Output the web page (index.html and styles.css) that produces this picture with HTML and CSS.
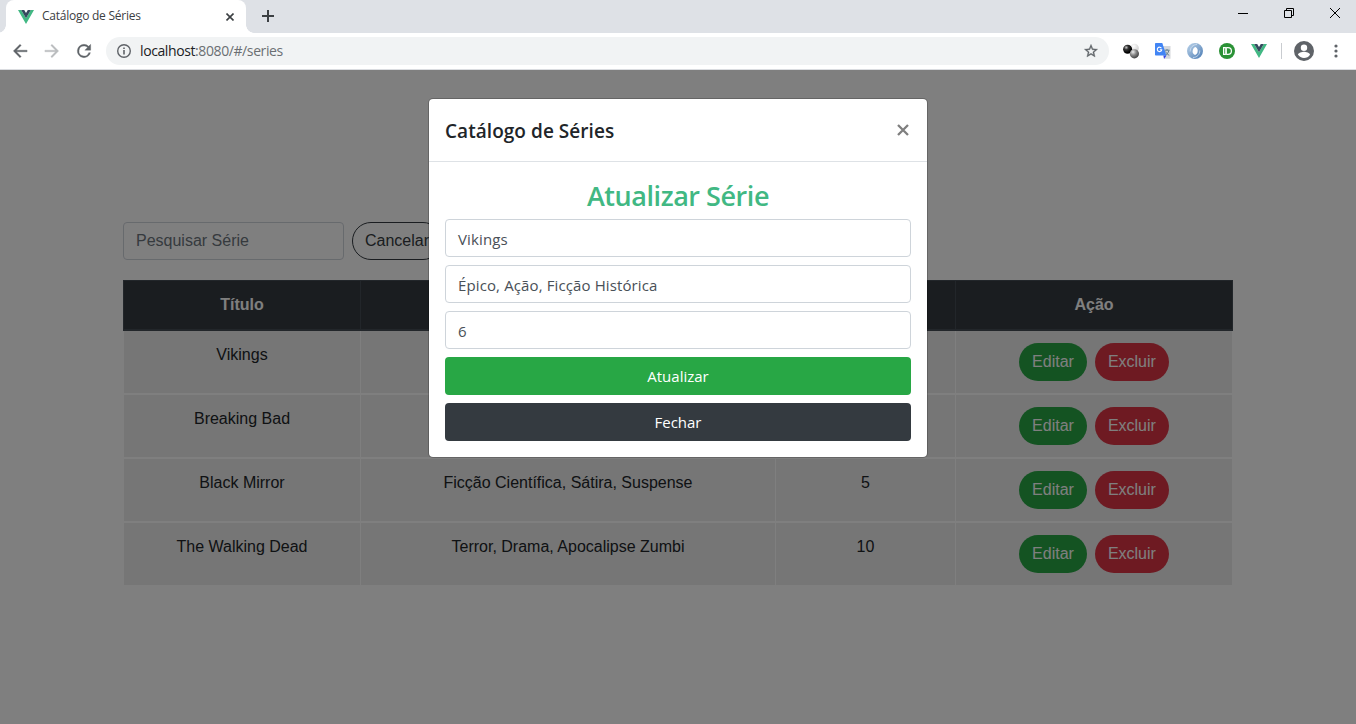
FILE: index.html
```
<!DOCTYPE html>
<html lang="pt-BR">
<head>
<meta charset="utf-8">
<title>Catálogo de Séries</title>
<link rel="stylesheet" href="styles.css">
</head>
<body>
<div class="window">
  <header class="tabstrip">
    <div class="tab">
      <svg class="favicon" width="16" height="14" viewBox="0 0 16 14"><path d="M0 0h3.2L8 8.3 12.8 0H16L8 13.9z" fill="#41b883"/><path d="M3.2 0h3L8 3.1 9.8 0h3L8 8.3z" fill="#35495e"/></svg>
      <span class="tab-title">Catálogo de Séries</span>
      <svg class="tab-close" width="8" height="8" viewBox="0 0 8 8"><path d="M.5.5l7 7M7.5.5l-7 7" stroke="#3c4043" stroke-width="1.6"/></svg>
    </div>
    <svg class="new-tab" width="12" height="12" viewBox="0 0 12 12"><path d="M6 0v12M0 6h12" stroke="#3c4043" stroke-width="2"/></svg>
    <div class="window-controls">
      <svg width="10" height="10" viewBox="0 0 10 10"><path d="M0 5.5h10" stroke="#000"/></svg>
      <svg width="10" height="10" viewBox="0 0 10 10"><path d="M.5 2.5h7v7h-7zM2.5 2.5v-2h7v7h-2" fill="none" stroke="#000"/></svg>
      <svg width="10" height="10" viewBox="0 0 10 10"><path d="M0 0l10 10M10 0L0 10" stroke="#000"/></svg>
    </div>
  </header>
  <nav class="toolbar">
    <svg class="nav-icon" width="20" height="20" viewBox="0 0 24 24"><path d="M20.500 11H7.830l5.590-5.590L12 4l-8 8 8 8 1.410-1.410L7.830 13H20.500z" fill="#5f6368" stroke="#5f6368" stroke-width=".4"/></svg>
    <svg class="nav-icon" width="20" height="20" viewBox="0 0 24 24"><path d="M12 4l-1.410 1.410L16.170 11H3.500v2h12.670l-5.580 5.590L12 20l8-8z" fill="#babcbe" stroke="#babcbe" stroke-width=".4"/></svg>
    <svg class="nav-icon" width="20" height="20" viewBox="0 0 24 24"><path d="M17.65 6.35A7.96 7.96 0 0 0 12 4a8 8 0 1 0 7.73 10h-2.08A6 6 0 1 1 12 6c1.66 0 3.14.69 4.22 1.78L13 11h7V4z" fill="#5f6368" stroke="#5f6368" stroke-width=".4"/></svg>
    <div class="address">
      <svg width="16" height="16" viewBox="0 0 16 16"><circle cx="8" cy="8" r="6.3" fill="none" stroke="#5f6368" stroke-width="1.4"/><path d="M8 7v4.4M8 4.4V6" stroke="#5f6368" stroke-width="1.6"/></svg>
      <span class="url">localhost<span class="url-path">:8080/#/series</span></span>
      <svg class="star" width="16" height="16" viewBox="0 0 24 24"><path d="M22 9.24l-7.19-.62L12 2 9.19 8.63 2 9.24l5.46 4.73L5.82 21 12 17.27 18.18 21l-1.63-7.03zM12 15.4l-3.76 2.27 1-4.28-3.32-2.88 4.38-.38L12 6.1l1.71 4.04 4.38.38-3.32 2.88 1 4.28z" fill="#5f6368" stroke="#5f6368" stroke-width=".5"/></svg>
    </div>
    <div class="extensions">
      <svg width="16" height="16" viewBox="0 0 16 16"><defs><radialGradient id="dark" cx=".35" cy=".3" r=".6"><stop offset="0" stop-color="#ccc"/><stop offset=".4" stop-color="#333"/><stop offset="1" stop-color="#000"/></radialGradient><radialGradient id="mid" cx=".35" cy=".3" r=".7"><stop offset="0" stop-color="#eee"/><stop offset=".5" stop-color="#888"/><stop offset="1" stop-color="#444"/></radialGradient><radialGradient id="light" cx=".4" cy=".3" r=".7"><stop offset="0" stop-color="#fff"/><stop offset="1" stop-color="#ccc"/></radialGradient></defs><circle cx="11.5" cy="5" r="4.3" fill="url(#light)"/><circle cx="4.6" cy="6.3" r="4.5" fill="url(#dark)"/><circle cx="11.4" cy="10.8" r="4.6" fill="url(#mid)"/></svg>
      <svg width="16" height="16" viewBox="0 0 16 16"><path d="M6 3h9.500v12.700H9z" fill="#d6d8dc"/><path d="M9.500 7.200h5M12 6v1.200M13.800 7.500c-.5 2.500-2 4-3.800 4.800M10.700 8.500c.5 1.700 2 3 3.500 3.800" stroke="#607d8b" fill="none"/><path d="M8.500 12.500h3L9 16z" fill="#3440e8"/><path d="M.8 0h6.500l4.100 12.600H.8A.8.8 0 0 1 0 11.800V.8A.8.8 0 0 1 .8 0z" fill="#4285f4"/><path d="M6.400 5.200a2.200 2.200 0 1 0 .3 1.600H4.800" stroke="#fff" stroke-width="1.100" fill="none"/></svg>
      <svg width="16" height="16" viewBox="0 0 16 16"><defs><linearGradient id="ring" x1="0" y1="0" x2="1" y2="1"><stop offset="0" stop-color="#b9d2ea"/><stop offset=".5" stop-color="#86a9cf"/><stop offset="1" stop-color="#4779b3"/></linearGradient></defs><path fill-rule="evenodd" d="M8 0a8 8 0 1 0 0 16A8 8 0 0 0 8 0zM8.500 4c2 1 2.600 3 2 5.200-.5 1.500-1.200 2.300-2.500 2.800C5.700 10.800 5 8.700 6 6.400 6.500 5.200 7.300 4.400 8.500 4z" fill="url(#ring)"/><path d="M10 1.500C6 1.500 3 4.500 3.200 8.500M6 14.500c4 0 7-3 6.700-7" fill="none" stroke="#dce8f4" stroke-width=".7"/></svg>
      <svg width="16" height="16" viewBox="0 0 16 16"><circle cx="8" cy="8" r="8" fill="#2b9236"/><path d="M4 4h5a4 4 0 0 1 0 8H4z" fill="#fff"/><path d="M5.300 5.200h1v5.600h-1zM8 5.200h1a2.800 2.800 0 0 1 0 5.600H8z" fill="#2b9236"/><path d="M6.300 4h1.700v8H6.300z" fill="#e6f4e7"/></svg>
      <svg width="16" height="14" viewBox="0 0 16 14"><path d="M0 0h3.200L8 8.300 12.800 0H16L8 13.900z" fill="#41b883"/><path d="M3.200 0h3L8 3.100 9.800 0h3L8 8.300z" fill="#35495e"/></svg>
    </div>
    <span class="separator"></span>
    <svg class="profile" width="22" height="22" viewBox="1 1 22 22"><path d="M12 2a10 10 0 1 0 0 20 10 10 0 0 0 0-20zm0 3.500a3.200 3.200 0 1 1 0 6.400 3.200 3.200 0 0 1 0-6.400zm0 13.500c-2.500 0-4.710-1.280-6-3.220.03-1.990 4-3.080 6-3.080s5.970 1.090 6 3.080A7.200 7.200 0 0 1 12 19z" fill="#5f6368"/></svg>
    <svg class="menu-dots" width="4" height="14" viewBox="0 0 4 14"><g fill="#5f6368"><circle cx="2" cy="2" r="1.600"/><circle cx="2" cy="7" r="1.600"/><circle cx="2" cy="12" r="1.600"/></g></svg>
  </nav>
  <main class="page">
    <div class="container">
      <div class="search-row">
        <div class="search">Pesquisar Série</div>
        <div class="pill outline">Cancelar</div>
      </div>
      <div class="table">
        <div class="row head"><div class="cell">Título</div><div class="cell"></div><div class="cell"></div><div class="cell">Ação</div></div>
        <div class="row"><div class="cell">Vikings</div><div class="cell"></div><div class="cell"></div><div class="cell actions"><span class="pill edit">Editar</span><span class="pill delete">Excluir</span></div></div>
        <div class="row"><div class="cell">Breaking Bad</div><div class="cell"></div><div class="cell"></div><div class="cell actions"><span class="pill edit">Editar</span><span class="pill delete">Excluir</span></div></div>
        <div class="row"><div class="cell">Black Mirror</div><div class="cell">Ficção Científica, Sátira, Suspense</div><div class="cell">5</div><div class="cell actions"><span class="pill edit">Editar</span><span class="pill delete">Excluir</span></div></div>
        <div class="row"><div class="cell">The Walking Dead</div><div class="cell">Terror, Drama, Apocalipse Zumbi</div><div class="cell">10</div><div class="cell actions"><span class="pill edit">Editar</span><span class="pill delete">Excluir</span></div></div>
      </div>
    </div>
    <div class="backdrop">
      <section class="modal">
        <div class="modal-header">
          <h5 class="modal-title">Catálogo de Séries</h5>
          <svg class="modal-close" width="12" height="12" viewBox="0 0 12 12"><path d="M1 1l10 10M11 1L1 11" stroke="#7f7f7f" stroke-width="2.300"/></svg>
        </div>
        <div class="modal-body">
          <h3 class="form-title">Atualizar Série</h3>
          <div class="field">Vikings</div>
          <div class="field">Épico, Ação, Ficção Histórica</div>
          <div class="field">6</div>
          <div class="button save">Atualizar</div>
          <div class="button close">Fechar</div>
        </div>
      </section>
    </div>
  </main>
</div>
</body>
</html>
```
FILE: styles.css
```
* { box-sizing: border-box; }
body { margin: 0; overflow: hidden; }
svg { display: block; flex: none; }

.window { width: 1356px; height: 724px; display: flex; flex-direction: column; font-family: "Open Sans", "Noto Sans", sans-serif; }

.tabstrip { height: 33px; flex: none; display: flex; background: #dee1e6; }
.tab { width: 240px; margin-left: 6px; padding: 0 12px; display: flex; align-items: center; background: #fff; border-radius: 8px 8px 0 0; position: relative; }
.tab::before, .tab::after { content: ""; position: absolute; bottom: 0; width: 8px; height: 8px; }
.tab::before { left: -8px; background: radial-gradient(circle at 0 0, transparent 7.5px, #fff 8px); }
.tab::after { right: -8px; background: radial-gradient(circle at 100% 0, transparent 7.5px, #fff 8px); }
.tab-title { margin: -2px auto 0 8px; font-size: 12px; letter-spacing: -0.25px; color: #3c4043; }
.new-tab { margin: 10px 0 0 16px; }
.window-controls { margin: 8px 16px 0 auto; display: flex; gap: 36px; }

.toolbar { height: 37px; flex: none; padding: 0 18px 1px 10px; display: flex; align-items: center; background: #fff; border-bottom: 1px solid #dadce0; }
.nav-icon { margin-right: 12px; }
.address { width: 1003px; height: 28px; padding: 0 10px; display: flex; align-items: center; border-radius: 14px; background: #f1f3f4; }
.url { margin: 0 auto 0 8px; font-size: 14px; letter-spacing: -0.4px; color: #202124; }
.url-path { color: #6b6f73; }
.extensions { margin-left: 14px; display: flex; align-items: center; gap: 16px; }
.separator { width: 1px; height: 16px; margin-left: 14px; background: #c9ccd0; }
.profile { margin-left: 11px; }
.menu-dots { margin-left: auto; }

.page { flex: 1; min-height: 0; position: relative; background: #fff; font: 16px/24px "Liberation Sans", Arial, sans-serif; color: #212529; }
.container { width: 1110px; margin: 0 auto; padding-top: 152px; }
.search-row { display: flex; gap: 8px; margin-bottom: 20px; }
.search { width: 221px; height: 38px; padding: 6px 12px; border: 1px solid #ced4da; border-radius: 4px; color: #6c757d; }
.pill { height: 38px; padding: 7px 13px; border-radius: 19px; color: #fff; }
.outline { padding: 6px 12px; border: 1px solid #343a40; color: #343a40; }
.edit { background: #28a745; }
.delete { background: #dc3545; }

.table { text-align: center; }
.row { height: 64px; padding: 0 1px; display: grid; grid-template-columns: 237px 415px 180px 276px; border-bottom: 2px solid #fff; }
.cell { padding-top: 12px; border-right: 1px solid #fff; background: #ececec; }
.cell:last-child { border-right: 0; }
.head { height: 51px; padding: 0; border: 1px solid #454d55; border-bottom-width: 2px; font-weight: bold; color: #fff; }
.head .cell { background: #343a40; border-color: #454d55; }
.actions { display: flex; justify-content: center; gap: 8px; }

.backdrop { position: absolute; inset: 0; padding-top: 28px; background: rgba(0, 0, 0, .5); }
.modal { width: 500px; height: 360px; margin: 0 auto; background: #fff; background-clip: padding-box; border: 1px solid rgba(0, 0, 0, .2); border-radius: 5px; font-family: "Open Sans", "Noto Sans", sans-serif; }
.modal-header { height: 63px; padding: 0 18px 0 16px; display: flex; align-items: center; justify-content: space-between; border-bottom: 1px solid #dee2e6; }
.modal-title { margin: 2px 0 0; font-size: 19px; font-weight: 600; letter-spacing: 0.05px; }
.modal-body { padding: 16px; display: flex; flex-direction: column; gap: 8px; }
.form-title { margin: 0; height: 33px; padding-top: 1px; font-size: 27px; line-height: 34px; font-weight: 600; letter-spacing: -0.45px; text-align: center; color: #41b883; }
.field { height: 38px; padding: 7px 12px; border: 1px solid #ced4da; border-radius: 4px; font-size: 15px; letter-spacing: 0.12px; color: #495057; }
.button { height: 38px; padding-top: 7px; border-radius: 4px; text-align: center; font-size: 15px; color: #fff; }
.save { background: #28a745; }
.close { background: #343a40; }
```
